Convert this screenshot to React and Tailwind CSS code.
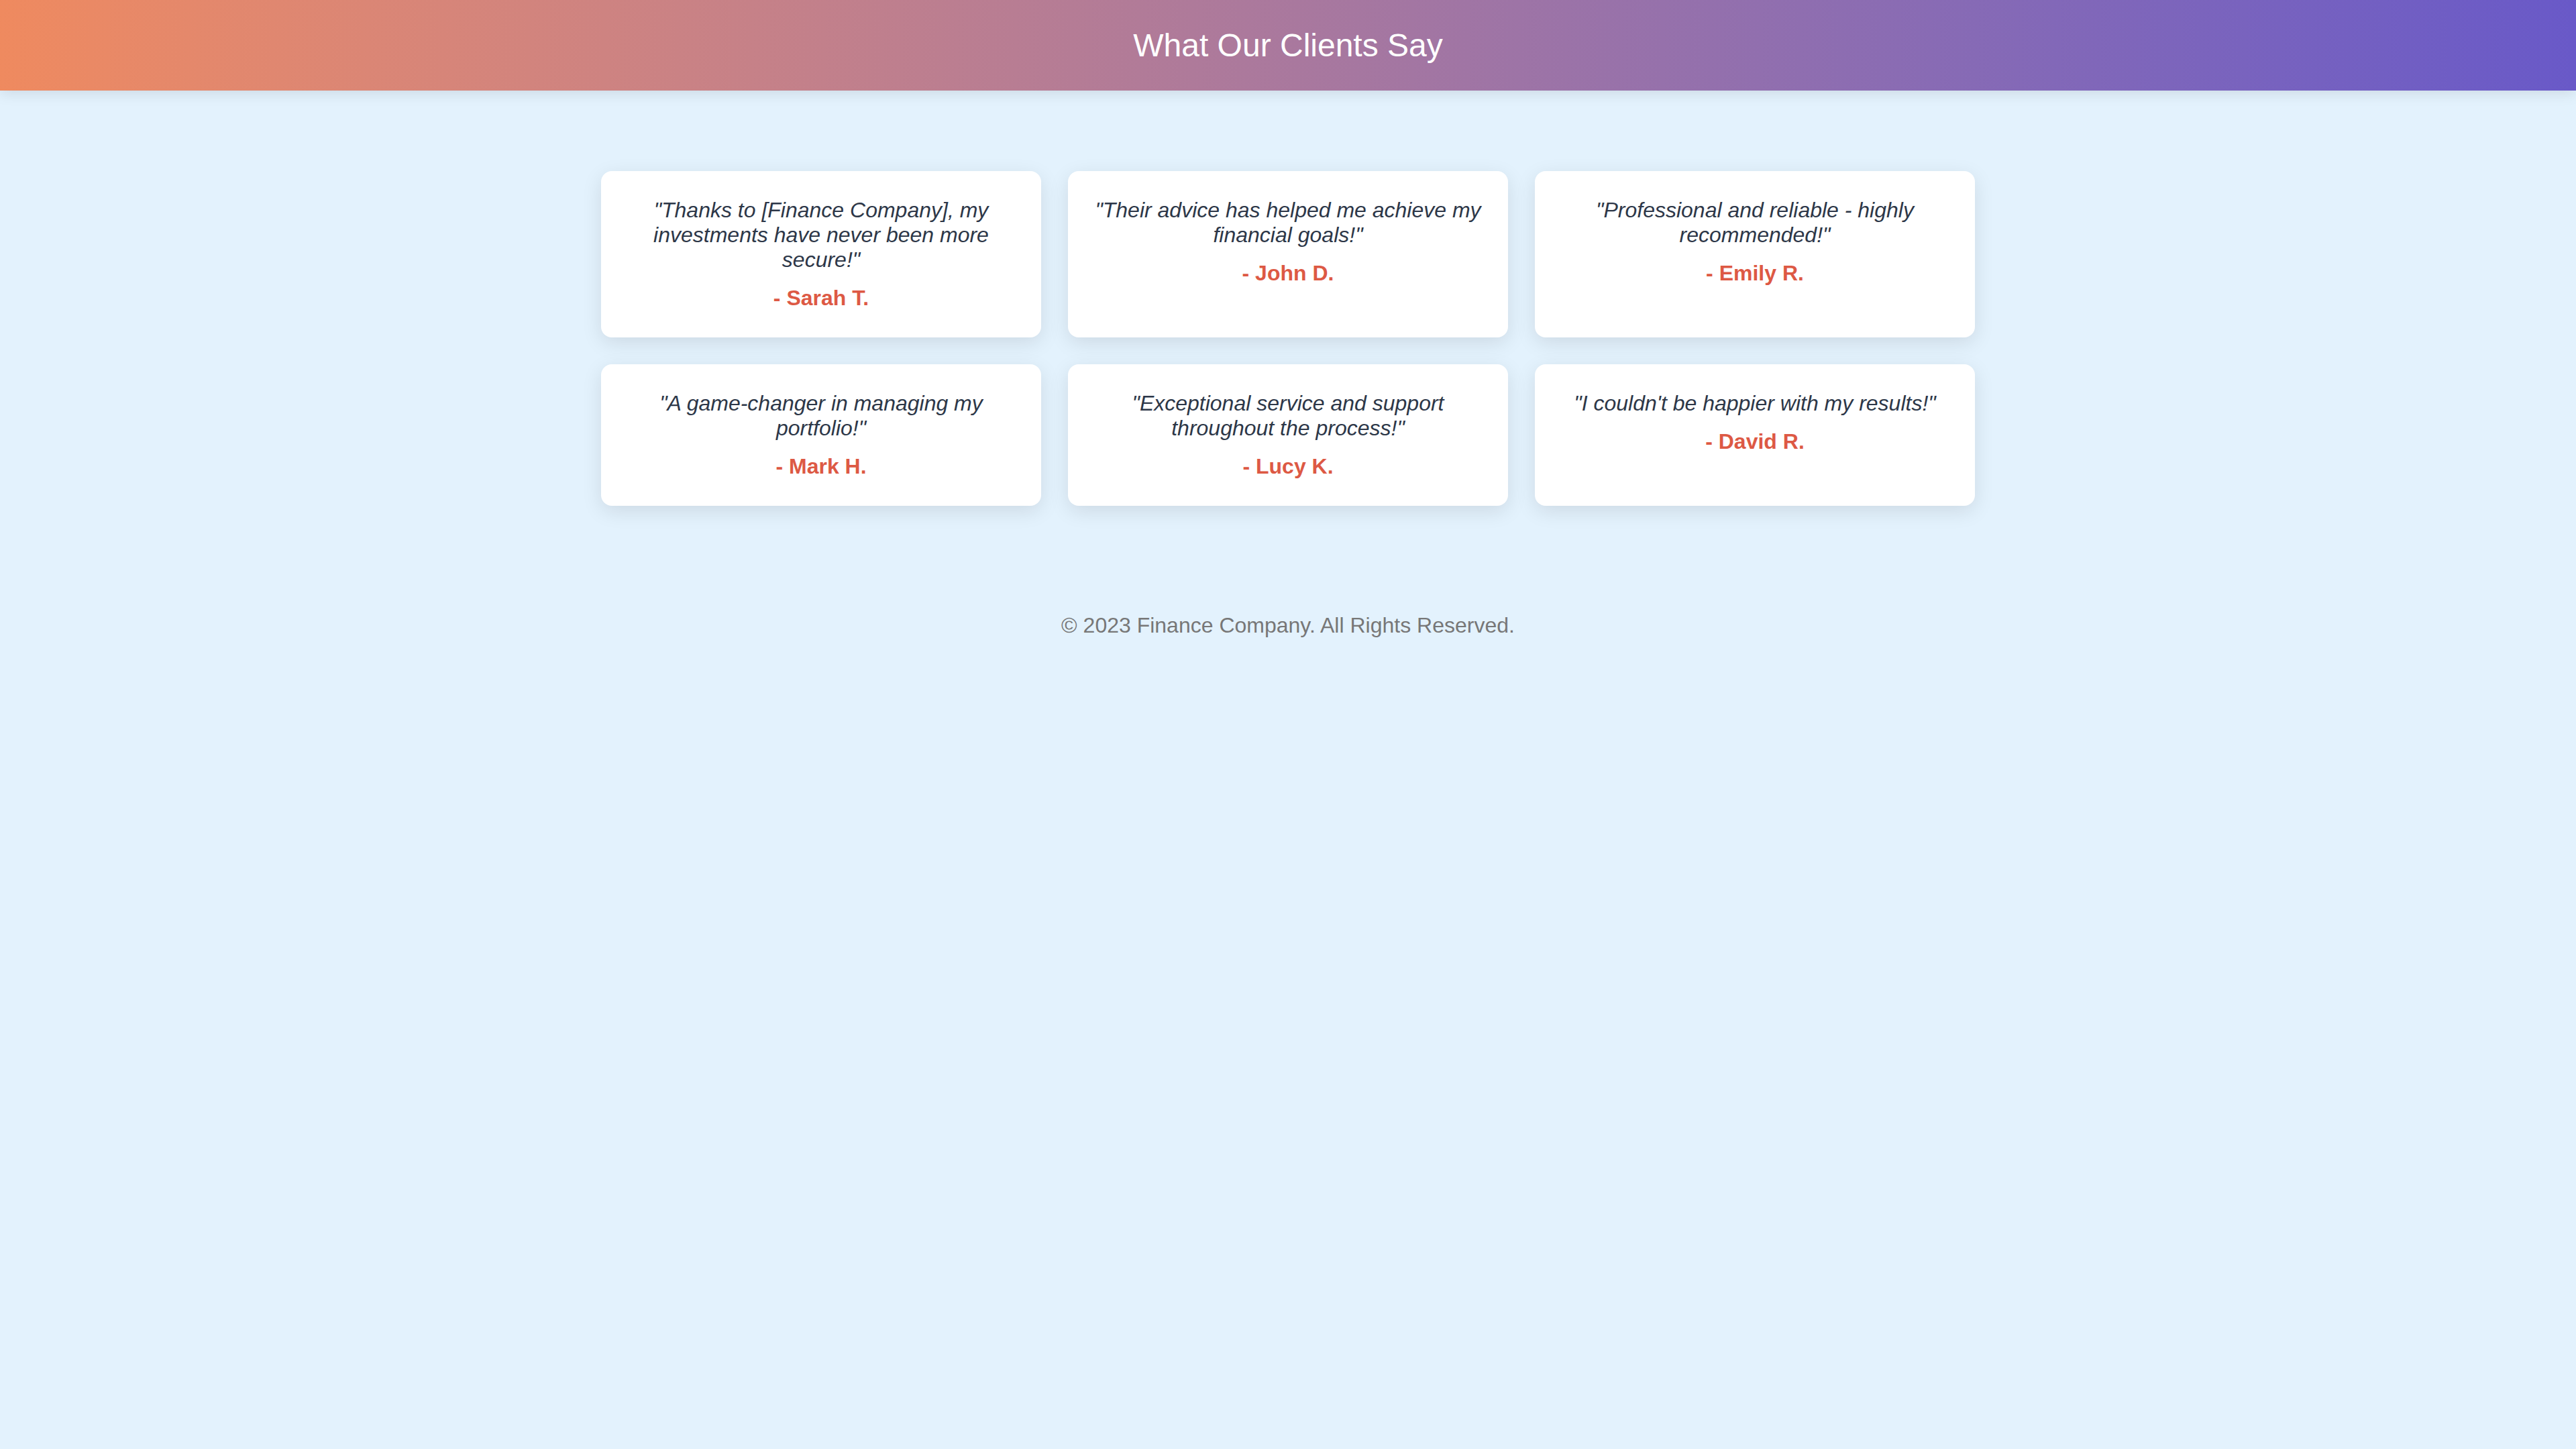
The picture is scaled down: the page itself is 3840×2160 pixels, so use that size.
const testimonios = [
  { texto: '"Thanks to [Finance Company], my investments have never been more secure!"', autor: "- Sarah T." },
  { texto: '"Their advice has helped me achieve my financial goals!"', autor: "- John D." },
  { texto: '"Professional and reliable - highly recommended!"', autor: "- Emily R." },
  { texto: '"A game-changer in managing my portfolio!"', autor: "- Mark H." },
  { texto: '"Exceptional service and support throughout the process!"', autor: "- Lucy K." },
  { texto: '"I couldn\'t be happier with my results!"', autor: "- David R." },
];

const Testimonio = ({ texto, autor }) => {
  return (
    <div className="bg-white rounded-2xl px-[36px] py-10 text-center shadow-[0_8px_30px_rgba(0,0,0,0.1)]">
      <p className="italic text-[32px] leading-[normal] text-[#2d3748]">{texto}</p>
      <p className="mt-5 font-bold text-[32px] leading-[normal] text-[#dd5944]">{autor}</p>
    </div>
  );
};

const App = () => {
  return (
    <div className="min-h-screen bg-[#e3f2fd] font-['Liberation_Sans',Arial,sans-serif]">
      <header className="relative z-10 bg-linear-to-r from-[#ef8a5f] to-[#6959c8] py-10 text-center shadow-[0_4px_20px_rgba(0,0,0,0.1)]">
        <h1 className="text-[48px] leading-[normal] font-normal text-white">What Our Clients Say</h1>
      </header>

      <main className="mx-auto max-w-[2048px] pt-[120px]">
        <div className="grid grid-cols-3 gap-10">
          {testimonios.map((t) => (
            <Testimonio key={t.autor} texto={t.texto} autor={t.autor} />
          ))}
        </div>
      </main>

      <footer className="pt-[160px] text-center text-[32px] leading-[normal] text-[#777777]">
        © 2023 Finance Company. All Rights Reserved.
      </footer>
    </div>
  );
};

export default App;
